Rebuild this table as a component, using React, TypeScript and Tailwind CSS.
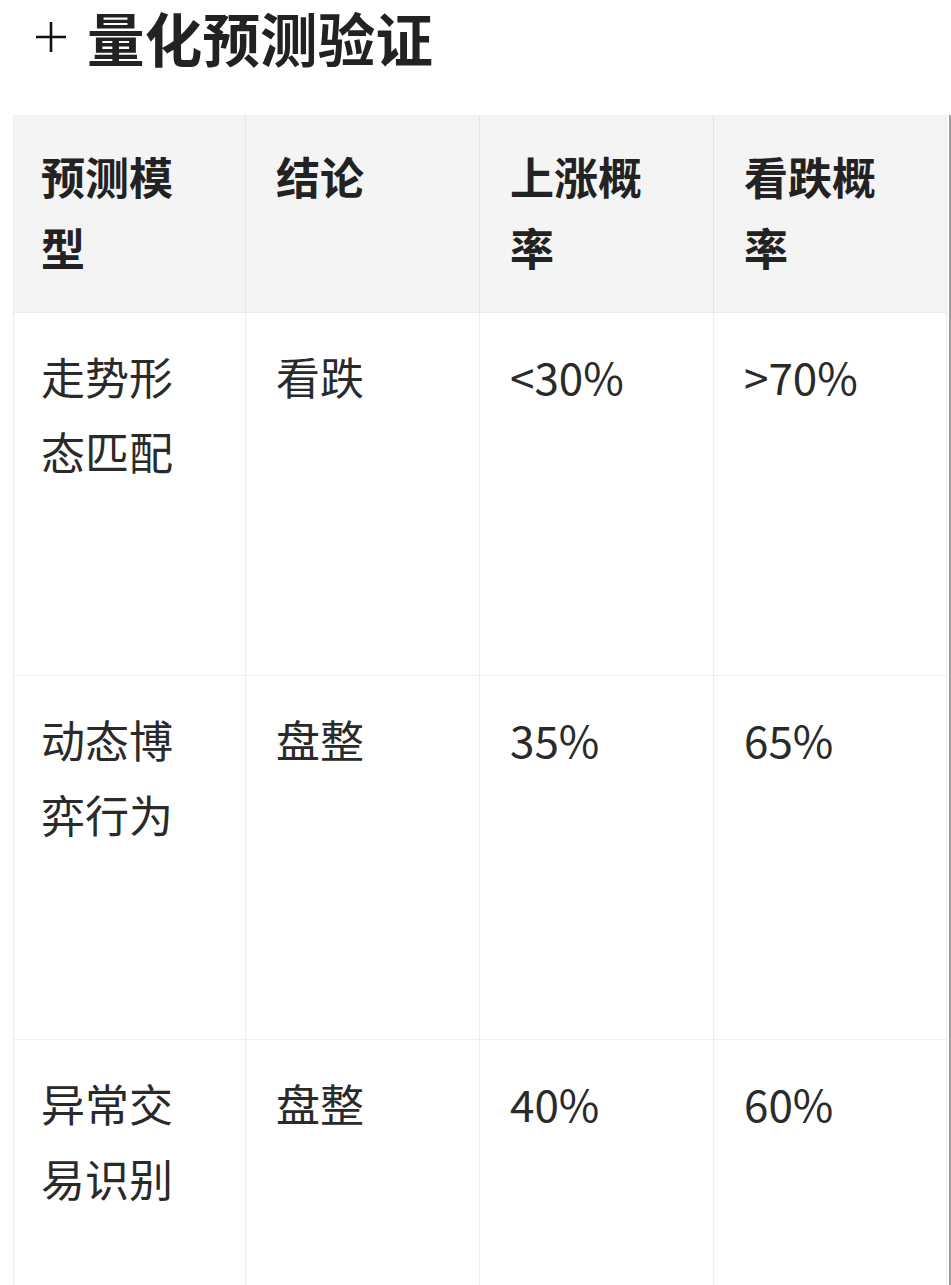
import React from "react";

const rows = [
  { model: "走势形态匹配", verdict: "看跌", up: "<30%", down: ">70%", h: "h-[363px]" },
  { model: "动态博弈行为", verdict: "盘整", up: "35%", down: "65%", h: "h-[364px]" },
  { model: "异常交易识别", verdict: "盘整", up: "40%", down: "60%", h: "h-[364px]" },
];

const headers = ["预测模型", "结论", "上涨概率", "看跌概率"];

export default function App() {
  return (
    <div
      className="w-[951px] h-[1285px] overflow-hidden bg-white text-[#2a2a2a]"
      style={{ fontFamily: '"Noto Sans CJK SC", "Noto Sans", sans-serif' }}
    >
      {/* title */}
      <div className="flex items-center pt-[2px] mb-[43px]">
        <svg className="ml-[35px] w-[32px] h-[32px]" viewBox="0 0 32 32" fill="none">
          <path d="M16 1v30M1 16h30" stroke="#111" strokeWidth="2.6" />
        </svg>
        <h2 className="ml-[20px] text-[57.5px] leading-[70px] font-bold text-[#222] tracking-[0.2px]">量化预测验证</h2>
      </div>

      <div className="flex">
        <div className="ml-[13px] w-[934px] border-l border-r border-[#ececec]">
          <div className="grid grid-cols-[231px_234px_234px_235px] bg-[#f4f4f4] h-[198px] border-b border-[#ececec]">
            {headers.map((t, i) => (
              <div
                key={t}
                className={`pt-[26px] text-[44px] leading-[71px] font-bold text-[#222] ${i === 0 ? "pl-[27px] pr-[40px]" : "pl-[30px] pr-[40px] border-l border-[#e4e4e4]"}`}
              >
                {t}
              </div>
            ))}
          </div>
          {rows.map((r) => (
            <div key={r.model} className={`grid grid-cols-[231px_234px_234px_235px] border-b border-[#efefef] ${r.h}`}>
              <div className="pl-[27px] pr-[40px] pt-[26px] text-[44px] leading-[75px]">{r.model}</div>
              <div className="pl-[30px] pr-[40px] pt-[26px] text-[44px] leading-[75px] border-l border-[#ececec]">{r.verdict}</div>
              <div className="pl-[30px] pt-[26px] text-[44px] leading-[75px] border-l border-[#ececec]">{r.up}</div>
              <div className="pl-[30px] pt-[26px] text-[44px] leading-[75px] border-l border-[#ececec]">{r.down}</div>
            </div>
          ))}
        </div>
        <div className="ml-[2px] w-[2px] bg-[#9c9c9c]" />
      </div>
    </div>
  );
}
